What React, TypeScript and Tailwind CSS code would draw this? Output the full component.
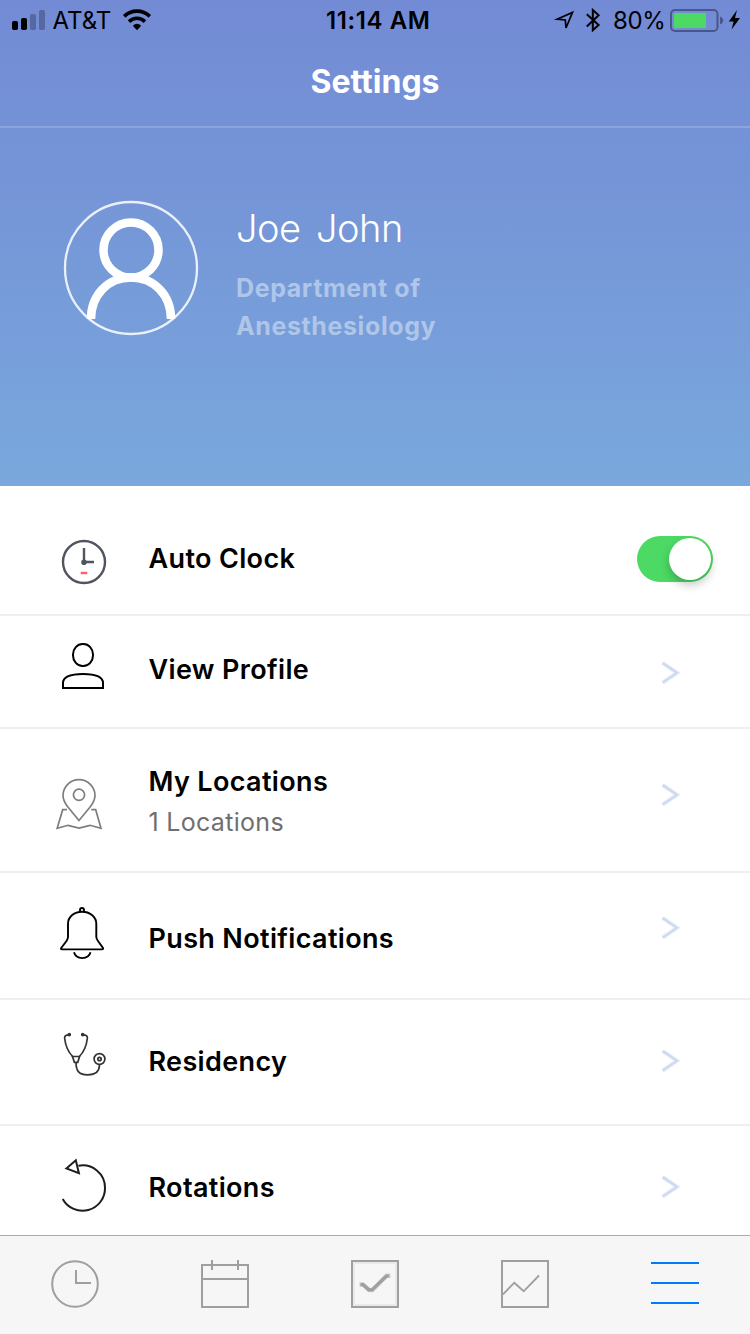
import type { ReactNode } from "react";

function StatusBar() {
  return (
    <div className="flex h-10 shrink-0 items-center text-[24px] leading-10 text-black">
      <svg className="h-10 w-[50px] shrink-0" viewBox="0 0 50 40">
        <rect x="12" y="21" width="6" height="9" rx="1.8" />
        <rect x="21" y="18" width="6" height="12" rx="1.8" />
        <rect x="30" y="14" width="6" height="16" rx="1.8" fill="#5569a0" />
        <rect x="39" y="10" width="6" height="20" rx="1.8" fill="#5569a0" />
      </svg>
      <span className="w-[70px] pt-[2px] pl-[2.5px] tracking-[0px] whitespace-nowrap">AT&amp;T</span>
      <svg className="h-10 w-[34px] shrink-0" viewBox="120 0 34 40">
        <path d="M124.2 16.8 A18.6 18.6 0 0 1 149.8 16.8" transform="translate(0 -.5)" fill="none" stroke="#000" strokeWidth="3.7" />
        <path d="M129 21.9 A11.4 11.4 0 0 1 145 21.9" transform="translate(0 -.3)" fill="none" stroke="#000" strokeWidth="3.6" />
        <path d="M132.8 25.8 Q137 21.8 141.2 25.8 L137 30.2 Z" />
      </svg>
      <span className="ml-[172px] w-[110px] pt-[2px] font-semibold tracking-[0.6px] whitespace-nowrap">11:14 AM</span>
      <svg className="ml-[114px] h-10 w-[60px] shrink-0" viewBox="550 0 60 40">
        <path d="M557 19.2 L572.5 12.4 L566 28 L565.3 20 Z" fill="none" stroke="#000" strokeWidth="1.7" />
        <path d="M586.8 14.2 L598.6 25 L592.8 30.2 V10 L598.6 15.2 L586.8 26.4" fill="none" stroke="#000" strokeWidth="2" />
      </svg>
      <span className="w-[60px] pt-[2px] pl-[3px] tracking-[-0.4px] whitespace-nowrap">80%</span>
      <svg className="h-10 w-[80px] shrink-0" viewBox="670 0 80 40">
        <rect x="671" y="10" width="46.5" height="21" rx="4" fill="none" stroke="#48568a" strokeWidth="2" />
        <rect x="674" y="13" width="32" height="15" rx="1" fill="#4cd964" />
        <path d="M720 16.6 Q723.2 18 723.2 20.6 T720 24.6 Z" fill="#48568a" />
        <path d="M737 10 L728.8 21.4 H733.6 L731.6 29.4 L740 17.9 H735 Z" />
      </svg>
    </div>
  );
}

function Header() {
  return (
    <header className="flex h-[486px] shrink-0 flex-col bg-linear-to-b from-[#738bd5] from-0% via-[#7595d7] via-40% to-[#79a8dd] to-100%">
      <StatusBar />
      <div className="flex h-[88px] shrink-0 justify-center border-b-2 border-[#8ca3dd] pt-[22px]">
        <h1 className="text-[32px] leading-10 font-bold text-white">Settings</h1>
      </div>
      <div className="flex">
        <svg className="mt-[72px] ml-[63px] size-[136px] shrink-0" viewBox="63 200 136 136" fill="none" stroke="#fff">
          <circle cx="131" cy="268" r="66" strokeWidth="2.3" strokeOpacity=".85" />
          <circle cx="131" cy="250" r="27.5" strokeWidth="8.5" />
          <path d="M91 319 C91 295 108 277.5 131 277.5 S171 295 171 319" strokeWidth="8.5" />
        </svg>
        <div className="pt-[77px] pl-[37px]">
          <div className="text-[38px] leading-[46px] font-light tracking-[-0.5px] whitespace-pre text-white [word-spacing:-2.5px]">Joe  John</div>
          <div className="mt-[18px] w-[260px] text-[25px] leading-[38px] font-bold tracking-[0.6px] text-[#afc6e9]">
            Department of<br />Anesthesiology
          </div>
        </div>
      </div>
    </header>
  );
}

function Chevron({ className }: { className: string }) {
  return (
    <svg className={`mr-[68px] ml-auto h-6 w-6 shrink-0 ${className}`} viewBox="0 0 24 24" fill="none">
      <path d="M4.6 2 L19 11.8 L4.6 21.6" stroke="#e9effa" strokeWidth="4.4" />
      <path d="M4.6 2 L19 11.8 L4.6 21.6" stroke="#ced9f1" strokeWidth="2.2" />
    </svg>
  );
}

function Row({ height, icon, title, titleClass, subtitle, children }: {
  height: string;
  icon: ReactNode;
  title: string;
  titleClass: string;
  subtitle?: string;
  children: ReactNode;
}) {
  return (
    <li className={`flex shrink-0 items-start border-b-2 border-[#efeff0] pl-10 ${height}`}>
      {icon}
      <div className={`pl-[8.5px] ${titleClass}`}>
        <div className="text-[27px] leading-10 font-semibold tracking-[0.35px] whitespace-nowrap text-black">{title}</div>
        {subtitle && <div className="text-[25px] leading-10 tracking-[0.3px] text-[#6f6f70]">{subtitle}</div>}
      </div>
      {children}
    </li>
  );
}

const icon = "w-[100px] shrink-0";

function SettingsList() {
  return (
    <ul className="flex h-[749px] shrink-0 flex-col overflow-hidden bg-white">
      <Row height="h-[130px]" title="Auto Clock" titleClass="pt-[53px]" icon={
        <svg className={`h-32 ${icon}`} viewBox="40 486 100 128" fill="none" stroke="#50545f" strokeWidth="2.4">
          <circle cx="84" cy="562" r="21" />
          <path d="M84 548 V562 H94" />
          <circle cx="84" cy="562.3" r="1.6" />
          <path d="M80.7 573 H87.3" stroke="#ff5d70" />
        </svg>
      }>
        <div className="mt-[50px] mr-[37px] ml-auto flex h-[46px] w-[76px] justify-end rounded-full bg-[#4cd964] p-0.5">
          <div className="size-[42px] rounded-full bg-white shadow-[0_5px_10px_rgba(0,0,0,0.22)]" />
        </div>
      </Row>
      <Row height="h-[113px]" title="View Profile" titleClass="pt-[34px]" icon={
        <svg className={`h-[111px] ${icon}`} viewBox="40 616 100 111" fill="none" stroke="#000" strokeWidth="2">
          <rect x="73" y="644" width="20" height="22" rx="9.5" ry="10.5" />
          <path d="M63 688 V683 Q63 674 83 674 T103 683 V688 Z" />
        </svg>
      }>
        <Chevron className="mt-[45px]" />
      </Row>
      <Row height="h-36" title="My Locations" titleClass="pt-[33px]" subtitle="1 Locations" icon={
        <svg className={`h-[142px] ${icon}`} viewBox="40 729 100 142" fill="none" stroke="#7e7e7e" strokeWidth="1.7">
          <path d="M79 820.5 L67.5 806.5 Q63 800.5 63 795.5 A16 15.8 0 0 1 95 795.5 Q95 800.5 90.5 806.5 Z" />
          <circle cx="79" cy="794.8" r="5.6" />
          <path d="M67 809.7 H62.7 L57.2 828.2 L68 825.3 L79 828 L90 825.3 L101 828.2 L95.7 809.7 H91.3" />
        </svg>
      }>
        <Chevron className="mt-[54px]" />
      </Row>
      <Row height="h-[127px]" title="Push Notifications" titleClass="pt-[46px]" icon={
        <svg className={`h-[125px] ${icon}`} viewBox="40 873 100 125" fill="none" stroke="#000" strokeWidth="1.9">
          <path d="M80 912 V910 Q80 908 82 908 T84 910 V912" />
          <path d="M68 924 C68 916.5 74.5 911.8 82 911.8 S96.3 916.5 96.3 924 V937 Q96.5 939 98 941 L103 948 Q103.5 949.4 102 949.4 H62 Q60.5 949.4 61.2 948 L66.5 941 Q68 938.5 68 937 Z" />
          <path d="M74 952.3 C76 960 88.5 960 90.5 952.3" />
        </svg>
      }>
        <Chevron className="mt-[43px]" />
      </Row>
      <Row height="h-[126px]" title="Residency" titleClass="pt-[42px]" icon={
        <svg className={`h-[124px] ${icon}`} viewBox="40 1000 100 124" fill="none" stroke="#333" strokeWidth="1.7">
          <path d="M69.5 1034.8 Q64.6 1034.5 64.6 1038 Q66 1050 72.7 1056.5 M82.5 1034.8 Q87.4 1034.5 87.4 1038 Q86 1050 79.3 1056.5" />
          <path d="M72.5 1056.5 H79.5 L77.8 1062.3 H74.4 Z M76 1062.5 C76 1071 79 1074.8 87.8 1074.8 C96.5 1074.8 99.5 1071 99.5 1064.8" />
          <circle cx="99.5" cy="1059" r="5.4" />
          <circle cx="99.5" cy="1059" r="1.7" />
          <circle cx="69.3" cy="1034.6" r="1" />
          <circle cx="82.7" cy="1034.6" r="1" />
        </svg>
      }>
        <Chevron className="mt-[49px]" />
      </Row>
      <Row height="h-[126px]" title="Rotations" titleClass="pt-[42px]" icon={
        <svg className={`h-[124px] ${icon}`} viewBox="40 1126 100 124" fill="none" stroke="#1d1d1d" strokeWidth="2">
          <path d="M78.4 1165.8 A22.4 22.4 0 0 1 105 1187.8 A22.5 22.3 0 0 1 62.7 1199" />
          <path d="M66.4 1168.4 L75.8 1160.3 L78.9 1173.2 Z" />
        </svg>
      }>
        <Chevron className="mt-[49px]" />
      </Row>
    </ul>
  );
}

function TabBar() {
  const svg = "size-[50px]";
  return (
    <nav className="grid h-[99px] shrink-0 grid-cols-5 items-start justify-items-center border-t border-[#acacac] bg-[#f6f6f6] pt-[23px]">
      <svg className={svg} viewBox="0 0 50 50" fill="none" stroke="#9f9f9f" strokeWidth="2">
        <circle cx="25" cy="25" r="22.8" />
        <path d="M26 11 V24 H41" />
      </svg>
      <svg className={svg} viewBox="0 0 50 50" fill="none" stroke="#9f9f9f" strokeWidth="2">
        <path d="M2 6 H48 V48 H2 Z M2 20 H48 M12 1 V11 M38 1 V11" />
      </svg>
      <svg className={svg} viewBox="0 0 50 50" fill="none" stroke="#9f9f9f" strokeWidth="2">
        <rect x="4" y="4" width="42" height="42" stroke="#e9e9e9" />
        <rect x="2" y="2" width="46" height="46" />
        <path d="M9.5 25.5 H13 L19 31 H22.5 L36.5 16.8 H40.5" stroke="#cfcfcf" strokeWidth="4.4" />
        <path d="M10.5 25.7 H13 L19 30.8 H22 L36.5 17 H39" strokeWidth="3.2" />
      </svg>
      <svg className={svg} viewBox="0 0 50 50" fill="none" stroke="#9f9f9f" strokeWidth="2">
        <rect x="2" y="2" width="46" height="46" />
        <path d="M3 35.3 L14.3 23.7 L23.7 32.3 L39 16.5" strokeWidth="1.9" />
      </svg>
      <svg className={svg} viewBox="0 0 50 50" fill="none" stroke="#007aff" strokeWidth="2">
        <path d="M1 4 H49 M1 24 H49 M1 44 H49" />
      </svg>
    </nav>
  );
}

export default function App() {
  return (
    <div className="flex h-[1334px] w-[750px] flex-col overflow-hidden bg-white font-['Inter',sans-serif]">
      <Header />
      <SettingsList />
      <TabBar />
    </div>
  );
}
